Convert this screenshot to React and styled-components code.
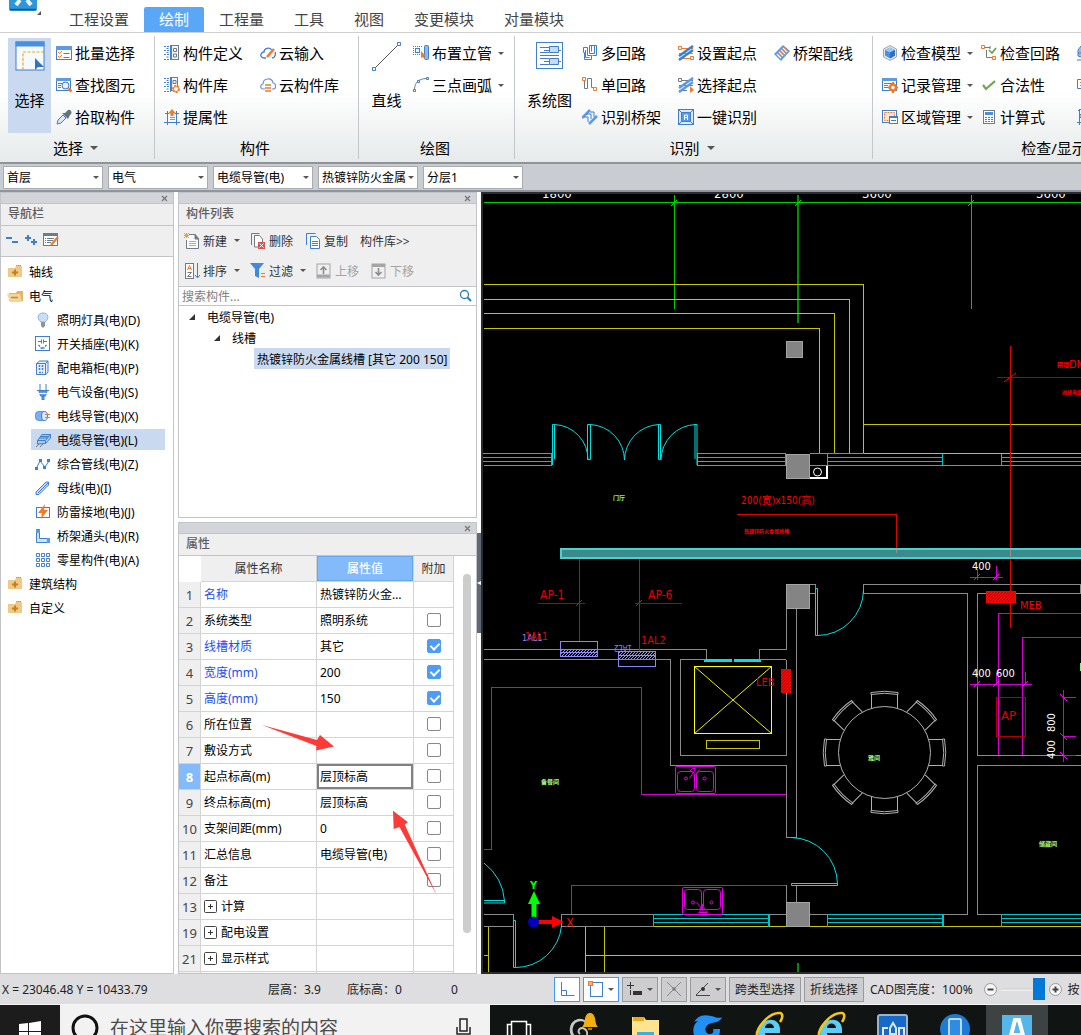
import React, { useState } from "react"
import styled, { createGlobalStyle } from "styled-components"

const GlobalStyle = createGlobalStyle`
  * {
    box-sizing: border-box;
  }
  body {
    margin: 0;
    background: #fff;
    color: #000;
    font-family: "Noto Sans", "Noto Sans CJK SC", sans-serif;
    font-size: 12px;
    overflow: hidden;
  }
  button, input, select {
    font: inherit;
    color: inherit;
  }
  button {
    padding: 0;
    border: 0;
    background: none;
    white-space: nowrap;
  }
  ul {
    list-style: none;
    margin: 0;
    padding: 0;
  }
`

const BLUE = "#3f7fcb"
const ORANGE = "#f0792a"
const GREY = "#6f7b86"

const icons = {
  batch: (
    <>
      <rect x="0.5" y="1.5" width="15" height="13" fill="#fff" stroke={BLUE} />
      <rect x="0" y="1" width="16" height="4" fill="#5a9ae6" />
      <path d="M2 7l1.5 1.5L6 6M2 11l1.5 1.5L6 10" stroke={ORANGE} />
      <path d="M7.5 8.5h6M7.5 12.5h6" stroke={GREY} />
    </>
  ),
  find: (
    <>
      <rect x="0.5" y="1.5" width="14" height="12" fill="#fff" stroke={BLUE} />
      <rect x="0" y="1" width="15" height="3" fill="#5a9ae6" />
      <path d="M2 6.5h4M2 8.5h3M2 10.5h3" stroke={GREY} />
      <circle cx="9.5" cy="8.5" r="3.5" fill="#e6effc" stroke="#3f6fb0" />
      <path d="M12.5 11.5l3 3" stroke={ORANGE} strokeWidth="3" />
    </>
  ),
  pick: (
    <>
      <path d="M1 15l1-4 5-5 3 3-5 5z" fill="#dbe8f8" stroke={BLUE} />
      <path d="M6 4l6 6 1-2 1-2c3-2 1-6-2-5l-3 3z" fill="#63727e" />
    </>
  ),
  define: (
    <>
      <path d="M0 1.5h5M0 5.5h5M0 9.5h5M0 14.5h5M2.5 3.5h3M2.5 7.5h3M2.5 12h3" stroke={BLUE} strokeDasharray="2 1" />
      <rect x="7.5" y="0.5" width="7" height="14" fill="#f4f4f4" stroke={GREY} />
      <path d="M6.5 0v15" stroke={BLUE} />
      <path d="M9.5 3.5h3v3h-3zM9.5 9h3v3h-3z" stroke={GREY} />
    </>
  ),
  library: (
    <>
      <path d="M0 1.5h5M0 5.5h5M0 9.5h5M0 14.5h5M2.5 3.5h3M2.5 7.5h3M2.5 12h3" stroke={BLUE} strokeDasharray="2 1" />
      <rect x="7.5" y="0.5" width="6" height="13" fill="#f4f4f4" stroke={GREY} />
      <path d="M6.5 0v15" stroke={BLUE} />
      <path d="M9 3.5h3v3h-3z" stroke={GREY} />
      <circle cx="12" cy="12" r="3" fill="#fff" stroke={ORANGE} strokeWidth="2" strokeDasharray="2 1" />
      <circle cx="12" cy="12" r="2.5" fill="#fff" stroke={ORANGE} />
    </>
  ),
  extract: (
    <>
      <path d="M1 4.5h4M11 4.5h4M0 13.5h16M3.5 2v14M12.5 2v14" stroke={BLUE} />
      <path d="M8 0l4 4.5h-2.5V7h-3V4.5H4z" fill={ORANGE} />
      <path d="M6 8.5h5M6 10.5h5" stroke={ORANGE} />
    </>
  ),
  cloudPen: (
    <>
      <path d="M6 13H4C1 13 0 10 1.5 8.5 2 7 3 7 4 7c0-4 6-5 7.5-2M15 7c1 2 0 6-3 6" stroke={BLUE} strokeWidth="1.3" />
      <path d="M7 12l7-8" stroke={ORANGE} strokeWidth="2.5" />
    </>
  ),
  cloudLib: (
    <>
      <path d="M5 12H3C0 12 0 7 3 7c0-6 9-7 10-1 3 0 4 6 0 6h-1" stroke="#6496d8" strokeWidth="1.2" />
      <path d="M5 8h6M5 11h6M5 14h6" stroke={ORANGE} strokeWidth="1.6" />
    </>
  ),
  riser: (
    <>
      <path d="M0 1.5h9M0 9.5h9M0.5 1v9" stroke={BLUE} strokeDasharray="1 1" />
      <rect x="2.5" y="3.5" width="4" height="4" stroke={BLUE} />
      <rect x="11.5" y="0.5" width="4" height="14" rx="1" fill="#8ab8ef" stroke={BLUE} />
      <path d="M8 6v7l2-1 1 2 1-1-1-2h2z" fill={ORANGE} />
    </>
  ),
  arc: (
    <>
      <path d="M1.5 12C2 5 6 2 13 1.5" stroke={GREY} />
      <path d="M0.5 12.5h2v2h-2zM4.5 3.5h2v2h-2zM13.5 0.5h2v2h-2z" fill="#fff" stroke={BLUE} />
    </>
  ),
  multi: (
    <path
      d="M1.5 2.5h4v8h4v4h-7v-7h-1zM3.500 5v7.500h4M7.500 0.500h7v10h-4M12.500 0.500v8h-5v-8M9.500 0.500v6"
      stroke={BLUE}
    />
  ),
  single: (
    <>
      <path d="M2.5 4v7.5h3V1.5h4v9h2" stroke={GREY} />
      <path d="M0.5 0.5h3v3h-3zM11.5 10.5h3v3h-3z" fill="#fff" stroke={ORANGE} />
    </>
  ),
  bridge: (
    <>
      <path d="M0 9l8-8M7 15l8-8" stroke="#5a9ae6" strokeWidth="2.5" />
      <path d="M2 8h4v5M5 5h4v5M8 3h4v5" stroke={BLUE} />
    </>
  ),
  setStart: (
    <>
      <path d="M1 3.5h14M1 8.5h14M1 13.5h14" stroke={ORANGE} />
      <path d="M0.5 1.5h3v3h-3zM12.5 11.5h3v3h-3z" fill="#fff" stroke={ORANGE} />
      <path d="M1 11L15 1M1 15L15 5" stroke={BLUE} strokeWidth="2.5" />
    </>
  ),
  selStart: (
    <>
      <path d="M1 3.5h14M1 8.5h14M1 13.5h8" stroke={GREY} />
      <path d="M0.5 1.5h3v3h-3z" fill="#fff" stroke={GREY} />
      <path d="M1 11L15 1M1 15L15 5" stroke="#5a9ae6" strokeWidth="2.5" />
      <path d="M12 9l4 4-4 3z" fill={ORANGE} />
    </>
  ),
  oneKey: (
    <>
      <rect x="0.5" y="0.5" width="15" height="15" fill="#dbe9fb" stroke={BLUE} />
      <path d="M0 0l4 4M16 0l-4 4M0 16l4-4M16 16l-4-4" stroke={BLUE} />
      <rect x="3.5" y="3.5" width="9" height="9" fill="#5a9ae6" stroke={BLUE} />
      <path d="M6.5 11V6h3v5M6 8.5h3" stroke="#fff" />
    </>
  ),
  wiring: (
    <>
      <path d="M0 9l9-9 7 6-9 10z" fill="#5a9ae6" />
      <path d="M5 7l4 4M7 5l4 4M9 3l4 4M3 9l4 4" stroke="#fff" strokeWidth="1.5" />
      <path d="M4 8l4 4M6 6l4 4M8 4l4 4M10 2l4 4" stroke={ORANGE} strokeWidth="1.2" />
    </>
  ),
  model: (
    <>
      <path d="M8 0.5l6.5 3.5v8L8 15.5 1.5 12V4z" fill="#e5e9ee" stroke="#9da5ac" />
      <path d="M8 2.5l5 2.5v5.5l-5 3-5-3V5z" fill="#4a90e2" />
      <path d="M8 2.5l5 2.5-5 2.5L3 5z" fill="#9cc6f7" />
      <path d="M8 7.5l5-2.5v5.5l-5 3z" fill="#2f6fc4" />
    </>
  ),
  record: (
    <>
      <rect x="0.5" y="1.5" width="14" height="12" fill="#fff" stroke={BLUE} />
      <rect x="0" y="1" width="15" height="3" fill="#5a9ae6" />
      <path d="M2 6.5h8M2 8.5h4M2 10.5h4" stroke={GREY} />
      <circle cx="11" cy="10.5" r="3" fill="#fff" stroke={ORANGE} strokeWidth="2.5" />
      <path d="M11 5v2M11 14v2M6 10.5h2M14 10.5h2" stroke={ORANGE} strokeWidth="2" />
    </>
  ),
  region: (
    <>
      <rect x="0.5" y="1.5" width="14" height="12" fill="#fff" stroke={BLUE} />
      <rect x="2.5" y="3.5" width="10" height="8" fill="#fde4cf" stroke={ORANGE} strokeDasharray="2 1" />
      <rect x="7.5" y="7.5" width="8" height="7" fill="#fff" stroke={BLUE} />
      <path d="M7 8.5h9M9 11.5h5" stroke={BLUE} />
    </>
  ),
  loop: (
    <>
      <path d="M4 2.5h5M5.5 5v7.5h6M9 1v3" stroke={GREY} />
      <path d="M0.5 0.5h3v3h-3zM11.5 11.5h3v3h-3z" fill="#fff" stroke={ORANGE} />
      <path d="M8 5l3 3 4-5" stroke="#5da34b" strokeWidth="1.6" />
    </>
  ),
  legal: <path d="M2 8l3 4 9-8" stroke="#6aa84f" strokeWidth="2.2" />,
  formula: (
    <>
      <rect x="2.5" y="1.5" width="11" height="13" fill="#fff" stroke={GREY} />
      <rect x="4" y="3" width="8" height="3" fill="#4a90e2" />
      <path d="M4 8.5h8M4 10.5h8M4 12.5h8" stroke={BLUE} strokeDasharray="2 1" />
    </>
  ),
  tower: <path d="M4 1L1 5v6l3 1 5-1V5L6 1zM5 1v14M0 15h12M1 8h8" fill="#9cbfe8" stroke={BLUE} />,
  note: (
    <>
      <path d="M0.5 2.5h15v9h-8l-3 3v-3h-4z" fill="#fff" stroke={BLUE} />
      <path d="M3 5.5h4M3 8.5h4" stroke={ORANGE} />
    </>
  ),
  axis: <path d="M2.5 0v16M0 13.5h16M1 2l2-2 2 2M3 5.5h3v3h-3z" stroke={BLUE} />,
  folder: (
    <>
      <path d="M1 4h7l1-2h6v11H1z" fill="#efc985" />
      <path d="M9 1.5h5" stroke="#d9a44a" />
      <path d="M5 8.5h6M8 5.500v6" stroke="#b98326" strokeWidth="2" />
    </>
  ),
  folderOpen: (
    <>
      <path d="M2 5h7l1-2h6v10H2z" fill="#e3b366" />
      <path d="M0 6h13l2 8H3z" fill="#f5d598" />
      <path d="M4 9.5h7" stroke="#c08c2c" strokeWidth="1.5" />
    </>
  ),
  lamp: (
    <>
      <path d="M6 10C1 6 3 1 8 1s7 5 2 9z" fill="#c8defa" stroke="#8cb4e4" />
      <path d="M6 10h4v4l-2 2-2-2z" fill="#8b949c" />
    </>
  ),
  socket: (
    <>
      <rect x="0.5" y="0.5" width="14" height="14" fill="#fff" stroke={BLUE} />
      <path d="M3 5.5h3M9 5.5h3M6.5 3.5v4M8.5 3.5v4" stroke={BLUE} />
      <path d="M3.500 9l1.500 1.500M11.500 9L10 10.500M5.500 12h4" stroke={BLUE} strokeWidth="1.3" />
    </>
  ),
  cabinet: (
    <>
      <path d="M1.5 3.5l3-2.5h8.5v11l-2 2.5h-9.5z" fill="#e7f0fb" stroke={BLUE} />
      <path d="M10.5 14V3.5h-9M10.5 3.5L13 1" stroke={BLUE} />
      <path d="M4.5 5v5M7.5 5v5M4 12.5h4" stroke={BLUE} strokeWidth="1.5" strokeDasharray="2 1" />
    </>
  ),
  plug: (
    <>
      <path d="M5 0v6M11 0v6M2 6.5h12" stroke={BLUE} />
      <path d="M4 7h8l-1.5 5h-5zM7 12h2v4H7z" fill="#6d9fdb" stroke={BLUE} />
      <path d="M4 9.5h8" stroke="#fff" />
    </>
  ),
  conduit: (
    <>
      <rect x="0.5" y="3.5" width="11" height="9" rx="3" fill="#7db0f0" stroke="#5a94dc" />
      <ellipse cx="9.5" cy="8" rx="3" ry="4.5" fill="#dceafc" stroke={BLUE} />
      <path d="M10 6.5h5M10 9.5h5" stroke={ORANGE} />
    </>
  ),
  tray: (
    <>
      <path d="M2.500 8.500h8v3l-8 .5zM2.500 8.500L7 2.500h8.500l-5 6M10.500 11.500l5-5.500V2.500M4.500 6h8.500M6 4.500h8" fill="#a9c8f0" stroke={BLUE} />
      <path d="M1 15l3-3M5 15l3-3" stroke={GREY} />
    </>
  ),
  polyline: (
    <>
      <path d="M1.5 12L5 5l5 6 4-6" stroke={BLUE} />
      <path d="M0 11h3v3H0zM4 3h3v3H4zM8 10h3v3H8zM12 3h3v3h-3z" fill={BLUE} />
    </>
  ),
  busbar: <path d="M1 12L11 2h2.5v3L4 14.5H1zM3 13l10-10" fill="#c4dbf7" stroke={BLUE} />,
  lightning: (
    <>
      <rect x="1.5" y="3.5" width="13" height="10" fill="#fff" stroke={BLUE} />
      <path d="M10 0L3 9h4l-1 6 7-9H9z" fill={ORANGE} />
    </>
  ),
  elbow: (
    <>
      <path d="M1.5 1.5h3v9h9v4h-12z" fill="#cfe1f8" stroke={BLUE} />
      <path d="M1 2h4v3H1zM12 10h3v5h-3z" fill="#5a9ae6" />
    </>
  ),
  grid: (
    <path
      d="M1.5 1.5h3v3h-3zM6.5 1.5h3v3h-3zM11.5 1.5h3v3h-3zM1.5 6.5h3v3h-3zM6.5 6.5h3v3h-3zM11.5 6.5h3v3h-3zM1.5 11.5h3v3h-3zM6.5 11.5h3v3h-3zM11.5 11.5h3v3h-3z"
      stroke={BLUE}
    />
  ),
  collapse: <path d="M1 6h6M7 10h6" stroke={BLUE} strokeWidth="2" />,
  expand: <path d="M1 6h6M4 3v6M7 10h6M10 7v6" stroke={BLUE} strokeWidth="2" />,
  edit: (
    <>
      <rect x="0.5" y="1.5" width="14" height="12" fill="#fff" stroke={GREY} />
      <rect x="0" y="1" width="15" height="3" fill={GREY} />
      <path d="M2 6.5h9M2 8.5h8M2 10.5h6" stroke={GREY} strokeDasharray="1 1 8" />
      <path d="M8 13l7-8" stroke={ORANGE} strokeWidth="2.2" />
    </>
  ),
  create: (
    <>
      <path d="M5 1.5h6l3.5 4v10h-12V7" fill="#fafafa" stroke={GREY} />
      <path d="M11 1v5h4" fill={GREY} stroke={GREY} />
      <path d="M5 8.5h7M5 10.5h7M5 12.5h7" stroke="#a9b1b8" />
      <path d="M0 0l5 5M5 0L0 5M2.5 0v5M0 2.5h5" stroke="#f0a030" />
    </>
  ),
  remove: (
    <>
      <path d="M1.5 12V0.5h8" stroke={GREY} />
      <path d="M4.5 2.5h5l3 3.5v8h-8z" fill="#fff" stroke={GREY} />
      <rect x="8" y="9" width="7" height="7" fill="#d9534f" />
      <path d="M9.5 10.5l4 4M13.5 10.5l-4 4" stroke="#fff" />
    </>
  ),
  copy: (
    <>
      <path d="M1.5 12V0.5h9" stroke={BLUE} />
      <path d="M5.5 3.5h6l3 3v9h-9z" fill="#fff" stroke={BLUE} />
      <path d="M7 8.5h6M7 10.5h6M7 12.5h6" stroke={BLUE} />
    </>
  ),
  sort: (
    <>
      <rect x="1.5" y="0.5" width="8" height="15" fill="#fff" stroke={GREY} />
      <path d="M3.5 7l2-4.5 2 4.5M4 5.5h3" stroke={ORANGE} />
      <path d="M3.5 9.5h4l-4 4h4" stroke={GREY} />
      <path d="M13.5 0v14M11 12l2.5 3 2.5-3" stroke={BLUE} />
    </>
  ),
  filter: (
    <>
      <path d="M0 0h14L9 6v9l-4-2V6z" fill="#3f8ae0" />
      <path d="M11 10.5h4M11 13.5h4" stroke={ORANGE} />
    </>
  ),
  up: (
    <>
      <rect x="1" y="1" width="13" height="14" stroke="#a5a5a5" />
      <path d="M1 13h13" stroke="#a5a5a5" strokeWidth="3" />
      <path d="M7.5 11V4M4.5 7l3-3 3 3" stroke="#8c8c8c" strokeWidth="1.6" />
    </>
  ),
  down: (
    <>
      <rect x="1" y="1" width="13" height="14" stroke="#a5a5a5" />
      <path d="M1 2.5h13" stroke="#a5a5a5" strokeWidth="3" />
      <path d="M7.5 5v7M4.5 9l3 3 3-3" stroke="#8c8c8c" strokeWidth="1.6" />
    </>
  ),
  search: (
    <>
      <circle cx="7.5" cy="6.5" r="4" stroke="#2a7fb8" strokeWidth="1.3" />
      <path d="M10.5 9.5l3.500 3.500" stroke="#2a7fb8" strokeWidth="2" />
    </>
  ),
  ortho: <path d="M2.5 1v13.5h13M2.5 9.5h5v5" stroke={BLUE} />,
  rectSnap: (
    <>
      <rect x="2.5" y="1.5" width="12" height="14" stroke={BLUE} />
      <rect x="0.500" y="0.500" width="4" height="4" fill="#f7b184" stroke={ORANGE} />
    </>
  ),
  pointAdd: (
    <>
      <path d="M0 4.5h7M3.5 1v7M3.5 9v5" stroke="#333" />
      <rect x="6" y="10" width="9" height="4" fill="#333" />
    </>
  ),
  cross: (
    <>
      <path d="M1 1l14 14M15 1L1 15" stroke="#888" />
      <path d="M6.5 6.5h3v3h-3z" fill="#777" />
    </>
  ),
  angle: (
    <>
      <path d="M1 14.5h14M1 14L13 2" stroke="#444" />
      <circle cx="8" cy="8" r="2" fill="#333" />
    </>
  ),
}

const Svg = styled.svg`
  flex: none;
  width: ${(p) => p.$size || 16}px;
  height: ${(p) => p.$size || 16}px;
  fill: none;
`

const Icon = ({ name }) => (
  <Svg viewBox="0 0 16 16" aria-hidden="true">
    {icons[name]}
  </Svg>
)

const Caret = styled.i`
  flex: none;
  border: ${(p) => (p.$big ? 4 : 3)}px solid transparent;
  border-top-color: #555;
  border-bottom: 0;
`

const Page = styled.div`
  display: flex;
  flex-direction: column;
  height: 100vh;
  overflow: hidden;
`

/* ---------- tabs ---------- */
const TabBar = styled.nav`
  display: flex;
  flex: none;
  align-items: flex-end;
  height: 33px;
  border-bottom: 1px solid #cfcfcf;
`
const Logo = styled.div`
  flex: none;
  width: 54px;
  height: 32px;
  padding-left: 9px;
`
const Tab = styled.button`
  height: 25px;
  padding: 0 15px;
  font-size: 15px;
  line-height: 25px;
  border-radius: 2px 2px 0 0;
  color: ${(p) => (p.$active ? "#fff" : "#444")};
  background: ${(p) => (p.$active ? "#5aa7f7" : "transparent")};
`

/* ---------- ribbon ---------- */
const RibbonBar = styled.div`
  display: flex;
  flex: none;
  overflow: hidden;
  border-bottom: 2px solid #8f9499;
  background: linear-gradient(#fff 45%, #e6eaea);
`
const Group = styled.section`
  display: flex;
  flex: none;
  flex-direction: column;
  width: ${(p) => p.$width}px;
  padding-top: 4px;
  position: relative;
  &:not(:last-child)::after {
    content: "";
    position: absolute;
    right: 0;
    top: 3px;
    bottom: 3px;
    width: 1px;
    background: #c5c8ca;
  }
`
const GroupBody = styled.div`
  display: flex;
  height: 96px;
  padding-left: ${(p) => p.$pad || 9}px;
  gap: ${(p) => p.$gap || 17}px;
`
const GroupLabel = styled.div`
  display: flex;
  justify-content: center;
  align-items: center;
  gap: 7px;
  height: 29px;
  padding-right: 4px;
  font-size: 15px;
  line-height: 20px;
`
const Column = styled.div`
  display: flex;
  flex-direction: column;
`
const Tool = styled.button`
  display: flex;
  align-items: center;
  gap: 3px;
  height: 32px;
  font-size: 15px;
  line-height: 20px;
  ${Caret} {
    margin-left: 3px;
  }
`
const BigTool = styled.button`
  display: flex;
  flex: none;
  flex-direction: column;
  align-items: center;
  gap: 17px;
  min-width: 43px;
  height: 95px;
  margin-top: 1px;
  padding-top: 3px;
  font-size: 15px;
  line-height: 24px;
  background: ${(p) => (p.$active ? "#c9d9f0" : "none")};
`

/* ---------- filter bar ---------- */
const FilterBar = styled.div`
  display: flex;
  flex: none;
  gap: 5px;
  padding: 2px 3px 1px;
  background: #c9ccd1;
  border-bottom: 2px solid #8f959c;
`
const SelectBox = styled.label`
  position: relative;
  width: 100px;
  select {
    display: block;
    appearance: none;
    width: 100%;
    height: 23px;
    padding: 0 11px 0 3px;
    border: 1px solid #a9abb0;
    border-radius: 0;
    background: #fff;
  }
  ${Caret} {
    position: absolute;
    right: 4px;
    top: 10px;
    pointer-events: none;
  }
`

/* ---------- panels ---------- */
const Workspace = styled.main`
  display: flex;
  flex: 1;
  min-height: 0;
`
const Middle = styled.div`
  display: flex;
  flex: none;
  flex-direction: column;
  gap: 4px;
  width: 299px;
  margin-left: 4px;
`
const Panel = styled.section`
  position: relative;
  display: flex;
  flex-direction: column;
  flex: ${(p) => p.$flex || "none"};
  width: ${(p) => p.$width || "auto"};
  min-height: 0;
  border: 1px solid #c2c4ca;
  overflow: hidden;
`
const Caption = styled.div`
  display: flex;
  flex: none;
  justify-content: flex-end;
  align-items: center;
  height: 11px;
  padding-right: 5px;
  background: #d3d4da;
  border-bottom: 1px solid #c2c4ca;
  button {
    display: flex;
  }
`
const Title = styled.h2`
  flex: none;
  height: 22px;
  margin: 0;
  padding-left: 7px;
  font-size: 12px;
  font-weight: 500;
  line-height: 20px;
  color: #5e5e5e;
  background: #efefef;
  border-bottom: 1px solid #c2c4ca;
`
const NavTools = styled.div`
  display: flex;
  flex: none;
  align-items: center;
  gap: 3px;
  height: 31px;
  padding: 0 4px 2px;
  background: #efefef;
  border-bottom: 1px solid #c2c4ca;
  button {
    display: flex;
  }
`
const NavTree = styled.ul`
  padding-top: 3px;
  li > button {
    display: flex;
    align-items: center;
    gap: 6px;
  }
`
const TreeFolder = styled.button`
  height: 24px;
  padding-left: 6px;
`
const TreeLeaf = styled.li`
  height: 24px;
  padding: 1px 0 0 30px;
`
const TreeItem = styled.button`
  width: 134px;
  height: 21px;
  padding-left: 4px;
  background: ${(p) => (p.$active ? "#c9d9f0" : "none")};
`
const ListTools = styled.div`
  display: grid;
  flex: none;
  grid-template-rows: 29px 31px;
  padding-left: 5px;
  background: #efefef;
  border-bottom: 1px solid #c2c4ca;
  > div {
    display: flex;
  }
`
const ListTool = styled.button`
  display: flex;
  align-items: center;
  gap: 3px;
  width: ${(p) => (p.$menu ? 66 : 55)}px;
  color: #333;
  &:disabled {
    color: #a3a3a3;
  }
  ${Caret} {
    margin-left: 4px;
  }
`
const SearchRow = styled.label`
  display: flex;
  flex: none;
  align-items: center;
  height: 19px;
  padding: 0 3px;
  border-bottom: 1px solid #c2c4ca;
  input {
    flex: 1;
    min-width: 0;
    height: 18px;
    padding: 0;
    border: 0;
    outline: 0;
  }
  input::placeholder {
    color: #808080;
  }
`
const Node = styled.button`
  display: flex;
  align-items: center;
  gap: 12px;
  height: 21px;
  margin-left: ${(p) => p.$indent}px;
  padding: 0 3px;
  background: ${(p) => (p.$active ? "#c9d9f0" : "none")};
`
const Twisty = styled.i`
  margin-left: 4px;
  border: solid transparent;
  border-width: 0 0 6px 6px;
  border-bottom-color: #333;
`

/* ---------- property table ---------- */
const TableArea = styled.div`
  display: flex;
  flex: 1;
  min-height: 0;
  overflow: hidden;
`
const Scrollbar = styled.div`
  width: 8px;
  margin: 18px 0 40px 9px;
  border-radius: 4px;
  background: #cdcdcd;
`
const Table = styled.table`
  flex: none;
  width: 275px;
  height: max-content;
  table-layout: fixed;
  border-spacing: 0;
  line-height: 18px;
  th, td {
    height: 26px;
    padding: 0 3px;
    border: solid #d4d4d4;
    border-width: 0 1px 1px 0;
    text-align: left;
    font-weight: 400;
    overflow: hidden;
    white-space: nowrap;
    text-overflow: ellipsis;
  }
  thead th {
    text-align: center;
    color: #333;
    background: #efefef;
  }
  thead th:first-child {
    background: #fff;
    border-color: transparent;
  }
  thead th.current {
    color: #fff;
    font-weight: 500;
    background: #82bafb;
    box-shadow: inset 0 0 0 1px #66a8f0;
  }
`
const RowHead = styled.th`
  && {
    text-align: center;
    padding: 0;
    font-size: 13px;
    font-weight: ${(p) => (p.$current ? 700 : 400)};
    color: ${(p) => (p.$current ? "#fff" : "#444")};
    background: ${(p) => (p.$current ? "#82bafb" : "#efefef")};
  }
`
const NameCell = styled.td`
  color: ${(p) => (p.$key ? "#1c50f0" : "#000")};
  button {
    display: flex;
    align-items: center;
    gap: 4px;
  }
`
const ValueCell = styled.td`
  box-shadow: ${(p) => (p.$current ? "inset 0 0 0 2px #808080" : "none")};
`
const CheckCell = styled.td`
  && {
    text-align: center;
    padding: 0;
  }
`
const Check = styled.input`
  appearance: none;
  display: block;
  width: 14px;
  height: 14px;
  margin: -1px auto 0;
  border: 1px solid #888;
  border-radius: 2px;
  background: #fff;
  &:checked {
    border-color: #4d9cf8;
    background: #4d9cf8;
  }
  &:checked::after {
    content: "";
    display: block;
    width: 4px;
    height: 7px;
    margin: 1px 0 0 4px;
    border: solid #fff;
    border-width: 0 2px 2px 0;
    transform: rotate(45deg);
  }
`
const Marks = styled.svg`
  position: absolute;
  left: -1px;
  top: -1px;
  width: 299px;
  height: 452px;
  pointer-events: none;
`
const Splitter = styled.div`
  display: flex;
  flex: none;
  flex-direction: column;
  justify-content: center;
  width: 4px;
`
const Handle = styled.button`
  display: flex;
  align-items: center;
  justify-content: center;
  height: 100px;
  background: #5f6976;
`
const Canvas = styled.div`
  flex: 1;
  min-width: 0;
  overflow: hidden;
  background: #000;
  border: solid #2a2c2f;
  border-width: 2px 0 2px 2px;
  svg {
    display: block;
  }
`

/* ---------- status bar ---------- */
const StatusBar = styled.footer`
  display: flex;
  flex: none;
  align-items: center;
  gap: 3px;
  height: 31px;
  padding-left: 2px;
  overflow: hidden;
  color: #222;
  background: #dedee0;
  border-bottom: 1px solid #f4f4f4;
  white-space: nowrap;
`
const Readout = styled.span`
  flex: none;
  width: ${(p) => p.$width}px;
`
const StatusButton = styled.button`
  display: flex;
  flex: none;
  align-items: center;
  justify-content: center;
  gap: 4px;
  height: 25px;
  padding: 0 ${(p) => (p.$text ? 5 : 4)}px;
  border: 1px solid ${(p) => (p.$on ? "#3d9bf5" : "#9a9a9c")};
  background: ${(p) => (p.$on ? "#fff" : "#cdcdcf")};
`
const Brightness = styled.label`
  flex: none;
  margin: 0 8px 0 3px;
`
const RoundButton = styled.button`
  display: flex;
  flex: none;
  border-radius: 50%;
`
const Range = styled.input`
  appearance: none;
  flex: none;
  width: 44px;
  height: 22px;
  margin: 0 1px;
  background: linear-gradient(#d0d0d2, #f2f2f2) center / 100% 3px no-repeat;
  &::-webkit-slider-thumb {
    appearance: none;
    width: 12px;
    height: 22px;
    background: #0078d7;
  }
`
const Hint = styled.span`
  margin-left: 3px;
`

/* ---------- taskbar ---------- */
const Taskbar = styled.div`
  display: flex;
  flex: none;
  height: 30px;
  overflow: hidden;
  background: #101413;
`
const Start = styled.button`
  display: flex;
  flex: none;
  justify-content: center;
  width: 60px;
  padding-top: 16px;
  background: #1c1c1c;
`
const SearchBox = styled.label`
  display: flex;
  flex: none;
  align-items: center;
  width: 430px;
  height: 46px;
  padding: 0 16px 0 10px;
  gap: 10px;
  background: #f2f2f2;
  input {
    flex: 1;
    min-width: 0;
    padding: 0;
    border: 0;
    outline: 0;
    background: none;
    font-size: 19px;
  }
  input::placeholder {
    color: #4c4c4c;
  }
`
const TaskItem = styled.button`
  display: flex;
  flex: none;
  justify-content: center;
  width: 62px;
  height: 48px;
  padding-top: 6px;
  background: ${(p) => (p.$active ? "#3d4242" : "none")};
`

const tabs = ["工程设置", "绘制", "工程量", "工具", "视图", "变更模块", "对量模块"]

const filters = ["首层", "电气", "电缆导管(电)", "热镀锌防火金属线槽", "分层1"]

const navItems = [
  ["lamp", "照明灯具(电)(D)"],
  ["socket", "开关插座(电)(K)"],
  ["cabinet", "配电箱柜(电)(P)"],
  ["plug", "电气设备(电)(S)"],
  ["conduit", "电线导管(电)(X)"],
  ["tray", "电缆导管(电)(L)"],
  ["polyline", "综合管线(电)(Z)"],
  ["busbar", "母线(电)(I)"],
  ["lightning", "防雷接地(电)(J)"],
  ["elbow", "桥架通头(电)(R)"],
  ["grid", "零星构件(电)(A)"],
]

const properties = [
  { no: 1, name: "名称", value: "热镀锌防火金属线槽", key: true },
  { no: 2, name: "系统类型", value: "照明系统", check: false },
  { no: 3, name: "线槽材质", value: "其它", key: true, check: true },
  { no: 4, name: "宽度(mm)", value: "200", key: true, check: true },
  { no: 5, name: "高度(mm)", value: "150", key: true, check: true },
  { no: 6, name: "所在位置", value: "", check: false },
  { no: 7, name: "敷设方式", value: "", check: false },
  { no: 8, name: "起点标高(m)", value: "层顶标高", check: false, current: true },
  { no: 9, name: "终点标高(m)", value: "层顶标高", check: false },
  { no: 10, name: "支架间距(mm)", value: "0", check: false },
  { no: 11, name: "汇总信息", value: "电缆导管(电)", check: false },
  { no: 12, name: "备注", value: "", check: false },
  { no: 13, name: "计算", group: true },
  { no: 19, name: "配电设置", group: true },
  { no: 21, name: "显示样式", group: true },
]

const ToolColumn = ({ items }) => (
  <Column>
    {items.map(([icon, label, menu]) => (
      <Tool key={icon} aria-label={label || icon}>
        <Icon name={icon} />
        {label}
        {menu && <Caret />}
      </Tool>
    ))}
  </Column>
)

const Ribbon = () => (
  <RibbonBar>
    <Group $width={155}>
      <GroupBody $pad={8} $gap={5}>
        <BigTool $active>
          <Svg $size={30} viewBox="0 0 30 30">
            <rect x="1" y="1" width="28" height="28" fill="#f6faff" stroke={BLUE} />
            <rect x="0.5" y="0.5" width="29" height="5" fill="#4a90e2" />
            <path d="M8 29V11h21" stroke="#f0a818" strokeWidth="1.2" strokeDasharray="3 1.5" />
            <path d="M20 17v12l3-3h6z" fill="#2f74c4" />
          </Svg>
          选择
        </BigTool>
        <ToolColumn items={[["batch", "批量选择"], ["find", "查找图元"], ["pick", "拾取构件"]]} />
      </GroupBody>
      <GroupLabel>
        选择 <Caret $big />
      </GroupLabel>
    </Group>
    <Group $width={204}>
      <GroupBody>
        <ToolColumn items={[["define", "构件定义"], ["library", "构件库"], ["extract", "提属性"]]} />
        <ToolColumn items={[["cloudPen", "云输入"], ["cloudLib", "云构件库"]]} />
      </GroupBody>
      <GroupLabel>构件</GroupLabel>
    </Group>
    <Group $width={156}>
      <GroupBody $pad={6} $gap={5}>
        <BigTool>
          <Svg $size={30} viewBox="0 0 30 30">
            <path d="M2 28L27 3" stroke="#555" />
            <path d="M0.5 26.5h3v3h-3zM25.5 1.5h3v3h-3z" fill="#fff" stroke={BLUE} />
          </Svg>
          直线
        </BigTool>
        <ToolColumn items={[["riser", "布置立管", true], ["arc", "三点画弧", true]]} />
      </GroupBody>
      <GroupLabel>绘图</GroupLabel>
    </Group>
    <Group $width={358}>
      <GroupBody $pad={12} $gap={10}>
        <BigTool>
          <Svg $size={30} viewBox="0 0 30 30">
            <rect x="1.5" y="1.5" width="26" height="26" fill="#fff" stroke={BLUE} />
            <path d="M5 6.5h9M5 11.5h9M5 14.5h19M5 17.5h9M5 23.5h9M14 9.5H9M14 20.5H9M24 9.5h2M24 20.5h2" stroke={BLUE} />
            <path d="M14.5 5.5h9v6h-9zM14.5 17.5h9v6h-9z" fill="#c5dcf8" stroke={BLUE} />
          </Svg>
          系统图
        </BigTool>
        <Columns>
          <ToolColumn items={[["multi", "多回路"], ["single", "单回路"], ["bridge", "识别桥架"]]} />
          <ToolColumn items={[["setStart", "设置起点"], ["selStart", "选择起点"], ["oneKey", "一键识别"]]} />
          <ToolColumn items={[["wiring", "桥架配线"]]} />
        </Columns>
      </GroupBody>
      <GroupLabel>
        识别 <Caret $big />
      </GroupLabel>
    </Group>
    <Group $width={366}>
      <GroupBody $gap={8}>
        <ToolColumn
          items={[["model", "检查模型", true], ["record", "记录管理", true], ["region", "区域管理", true]]}
        />
        <Columns>
          <ToolColumn items={[["loop", "检查回路"], ["legal", "合法性"], ["formula", "计算式"]]} />
          <ToolColumn items={[["tower"], ["note"], ["axis"]]} />
        </Columns>
      </GroupBody>
      <GroupLabel>检查/显示</GroupLabel>
    </Group>
  </RibbonBar>
)

const Columns = styled.div`
  display: flex;
  gap: 17px;
`

const PanelHead = ({ title }) => (
  <>
    <Caption>
      <button aria-label="关闭">
        <Svg $size={7} viewBox="0 0 7 7">
          <path d="M1 1l5 5M6 1L1 6" stroke="#777" strokeWidth="1.3" />
        </Svg>
      </button>
    </Caption>
    <Title>{title}</Title>
  </>
)

const NavPanel = () => {
  const [active, setActive] = useState("tray")
  return (
    <Panel $width="174px">
      <PanelHead title="导航栏" />
      <NavTools>
        <button aria-label="折叠"><Icon name="collapse" /></button>
        <button aria-label="展开"><Icon name="expand" /></button>
        <button aria-label="编辑"><Icon name="edit" /></button>
      </NavTools>
      <NavTree>
        <li><TreeFolder><Icon name="folder" />轴线</TreeFolder></li>
        <li>
          <TreeFolder><Icon name="folderOpen" />电气</TreeFolder>
          <ul>
            {navItems.map(([icon, label]) => (
              <TreeLeaf key={icon}>
                <TreeItem $active={active === icon} onClick={() => setActive(icon)}>
                  <Icon name={icon} />
                  {label}
                </TreeItem>
              </TreeLeaf>
            ))}
          </ul>
        </li>
        <li><TreeFolder><Icon name="folder" />建筑结构</TreeFolder></li>
        <li><TreeFolder><Icon name="folder" />自定义</TreeFolder></li>
      </NavTree>
    </Panel>
  )
}

const ComponentList = () => (
  <Panel $flex="0 0 326px">
    <PanelHead title="构件列表" />
    <ListTools>
      <div>
        <ListTool $menu><Icon name="create" />新建 <Caret /></ListTool>
        <ListTool><Icon name="remove" />删除</ListTool>
        <ListTool><Icon name="copy" />复制</ListTool>
        <ListTool>构件库&gt;&gt;</ListTool>
      </div>
      <div>
        <ListTool $menu><Icon name="sort" />排序 <Caret /></ListTool>
        <ListTool $menu><Icon name="filter" />过滤 <Caret /></ListTool>
        <ListTool disabled><Icon name="up" />上移</ListTool>
        <ListTool disabled><Icon name="down" />下移</ListTool>
      </div>
    </ListTools>
    <SearchRow>
      <input type="text" placeholder="搜索构件..." aria-label="搜索构件" />
      <Icon name="search" />
    </SearchRow>
    <ul>
      <li>
        <Node $indent={3}><Twisty />电缆导管(电)</Node>
        <ul>
          <li>
            <Node $indent={28}><Twisty />线槽</Node>
            <Node $indent={75} $active>热镀锌防火金属线槽 [其它 200 150]</Node>
          </li>
        </ul>
      </li>
    </ul>
  </Panel>
)

const PropertyPanel = () => (
  <Panel $flex="1">
    <PanelHead title="属性" />
    <TableArea>
      <Table>
        <colgroup>
          <col width="22" />
          <col width="116" />
          <col width="97" />
          <col width="40" />
        </colgroup>
        <thead>
          <tr>
            <th />
            <th>属性名称</th>
            <th className="current">属性值</th>
            <th>附加</th>
          </tr>
        </thead>
        <tbody>
          {properties.map((p) => (
            <tr key={p.no}>
              <RowHead $current={p.current}>{p.no}</RowHead>
              <NameCell $key={p.key}>
                {p.group ? (
                  <button>
                    <Svg $size={13} viewBox="0 0 13 13">
                      <rect x="0.5" y="0.5" width="12" height="12" rx="1" stroke="#444" />
                      <path d="M4 6.5h5M6.5 4v5" stroke="#333" />
                    </Svg>
                    {p.name}
                  </button>
                ) : (
                  p.name
                )}
              </NameCell>
              <ValueCell $current={p.current}>{p.value}</ValueCell>
              <CheckCell>
                {p.check !== undefined && (
                  <Check type="checkbox" defaultChecked={p.check} aria-label={p.name} />
                )}
              </CheckCell>
            </tr>
          ))}
          <tr>
            <RowHead />
            <td />
            <td />
            <td />
          </tr>
        </tbody>
      </Table>
      <Scrollbar />
    </TableArea>
    <Marks viewBox="178 522 299 452" fill="#fb3b38">
      <path d="M262 725L317 740L320 735L334 746.5L316 750.5L316.5 746Z" />
      <path d="M436.7 895L404.7 824.5L408 822.3L393 810.7L393.7 829L399.5 827Z" />
    </Marks>
  </Panel>
)

/* ---------- floor plan ---------- */
const CadText = styled.text`
  font-family: "Liberation Sans Narrow", "DejaVu Sans Condensed", "Noto Sans CJK SC", sans-serif;
  font-size: ${(p) => p.$size || 11}px;
  font-weight: ${(p) => (p.$bold ? 700 : 400)};
  fill: ${(p) => p.$color || "#fff"};
  stroke: none;
`

const Windows = ({ y, spans }) =>
  spans.map(([a, b]) => (
    <path
      key={a}
      d={`M${a} ${y}H${b}M${a} ${y + 4}H${b}M${a} ${y + 8}H${b}M${a + 0.5} ${y}v12M${b - 0.5} ${y}v12`}
    />
  ))

const Sink = ({ x, y, flip }) => (
  <g transform={`translate(${x} ${y})`} stroke="#e000e0">
    <rect width="40" height="27" rx="1" />
    <rect x="2" y={flip ? 2 : 5} width="17" height="20" rx="3" />
    <rect x="21" y={flip ? 2 : 5} width="17" height="20" rx="3" />
    <circle cx="10.5" cy={flip ? 15 : 12} r="1.5" />
    <circle cx="29" cy={flip ? 15 : 12} r="1.5" />
    <path d={flip ? "M14 15l6 7M17 25l3-8M16 22h7l2 3h-9M20 17v6" : "M14 12l6-9M18 11l6-8M14 5l3-3h3M14 3l3 3"} />
  </g>
)

const Ticks = ({ points }) => <path d={points.map(([x, y]) => `M${x - 3} ${y + 3}l6-6`).join("")} />

const FloorPlan = () => (
  <svg width="100%" height="100%" viewBox="483 194 598 778" preserveAspectRatio="xMinYMin slice" fill="none">
    <defs>
      <pattern id="hatchBlue" width="3" height="3" patternUnits="userSpaceOnUse">
        <path d="M0 3L3 0" stroke="#9a96ff" />
      </pattern>
      <pattern id="hatchRed" width="3" height="3" patternUnits="userSpaceOnUse">
        <rect width="3" height="3" fill="#d00000" />
        <path d="M0 3L3 0" stroke="#ff1010" />
      </pattern>
    </defs>

    <g shapeRendering="crispEdges">
      <path d="M798 195V323M798 963V972" stroke="#008f00" strokeWidth="2" />
      <path d="M484 202.5H1081M674.5 195V309M971.5 195V309" stroke="#00cc00" />
      <g stroke="#c9c400">
        <path d="M484 284.5H863.5V454M484 299.5H849.5V454M484 313.5H834.5V454M484 328.5H819.5V454" />
        <path d="M864 424.5H1081M864 453.5H1081" />
        <path d="M484 926.5H513M585 926.5H1081M585 955.5H1081M484 955.5H489M488.5 926V972M585.5 926V972M604.5 926V972" />
        <rect x="694.5" y="666.5" width="77" height="67" stroke="#ffff00" />
        <rect x="706.5" y="740.5" width="53" height="8" />
      </g>
      <g stroke="#00c4c4">
        <Windows y={453.5} spans={[[480, 552], [697, 786], [827, 943], [1001, 1090]]} />
        <path d="M484 465.5H552M697 465.5H786M827 465.5H943M1001 465.5H1081M827 453.5H863" />
        <Windows y={914.5} spans={[[653, 769], [827, 943], [1001, 1090]]} />
        <path d="M704 660.5H732M734 660.5H761" stroke="#00e0e0" strokeWidth="3" />
      </g>
      <path d="M864 453.5H1081" stroke="#c9c400" />
      <g stroke="#8a8a8a">
        <path d="M943 465.5H1001M484 649.5H706.5V659M484 659.5H670.5V765.5H786M680.5 755.5V659.5H706M680 755.5H786M786 649.5H759.5V659.5H786" />
        <path d="M786.5 608V649.5M786.5 659.5V755.5M786.5 765V837.5H796.5V608M786.5 885V902M796.5 886V902" />
        <path d="M810 584.5H815.5V593.5H810M1081 584.5H863.5V593.5H967.5V914.5M1080.5 584V593.5H977.5V755.5H1081M1081 765.5H977.5V914.5" />
        <path d="M484 914.5H513.5V926.5H484M653 914.5H561.5V926.5H653M769 914.5H786M769.5 914V926M810 914.5H827M943 914.5H967M943.5 914V926M977 914.5H1001M653.5 914V926" />
      </g>
      <g fill="#848484" stroke="#a4a4a4">
        <rect x="786.5" y="341.5" width="16" height="16" />
        <rect x="786.5" y="454.5" width="23" height="24" />
        <rect x="786.5" y="584.5" width="23" height="24" />
        <rect x="786.5" y="902.5" width="23" height="24" />
      </g>
      <path d="M810 465.5H827M810 453.5H827" stroke="#8a8a8a" />
      <path d="M827 466V477.5H810" stroke="#fff" strokeWidth="2" />
      <g stroke="#d000d0">
        <path d="M484 849.5H491.5V687.5H641.5V794.5H786M571.5 914V885.5H786" />
        <path d="M998.5 755V613.5H1081M1022.5 755V637.5H1081" />
        <path d="M970 577.5H1003M977.5 569V580M996.5 566V580" />
        <path d="M970 684.5H1032M977.5 678V687M996.5 673V684M1025.5 672V684" />
        <path d="M1063.5 690V762M1063 697.5H1076M1063 736.5H1076M1063 755.5H1076" />
      </g>
      <g stroke="#e00000">
        <path d="M737 514.5H896.5V553M579.5 558V641M639.5 558V651M1010.5 346V628" />
        <path d="M538 603.5H585M635 603.5H682M997 377.5H1081" stroke="#b00000" />
        <rect x="996.5" y="697.5" width="29" height="39" stroke="#b00000" />
      </g>
      <rect x="561" y="549" width="540" height="9" fill="#388c8b" stroke="#4fd0ce" strokeWidth="2" />
      <path d="M896.5 550V553M1010.5 550V558" stroke="#a08c88" />
      <g stroke="#8a86f5">
        <rect x="560.5" y="641.5" width="37" height="15" />
        <rect x="618.5" y="651.5" width="37" height="15" />
        <path d="M560 652.5H597M618 655.5H655" />
      </g>
      <path d="M1080.5 663V671" stroke="#8ff07a" />
    </g>

    <rect x="561" y="649" width="36" height="8" fill="url(#hatchBlue)" />
    <rect x="619" y="652" width="36" height="7" fill="url(#hatchBlue)" />
    <rect x="986.5" y="591.5" width="29" height="11" fill="url(#hatchRed)" stroke="#f00" />
    <rect x="781" y="669" width="10" height="24" fill="url(#hatchRed)" />
    <path d="M694.5 666.5L771.5 733.5M771.5 666.5L694.5 733.5" stroke="#f0f000" />
    <g stroke="#00dd00"><Ticks points={[[674, 203], [798, 203], [971, 203]]} /></g>
    <g stroke="#ff00ff">
      <Ticks points={[[977, 577], [996, 577], [977, 684], [996, 684], [1025, 684]]} />
      <path d="M1060 694l7 7M1060 733l7 7M1060 752l7 7" />
    </g>
    <g stroke="#ff0000">
      <Ticks points={[[579, 603], [639, 603]]} />
      <path d="M1004 382l12-9" />
    </g>

    {/* doors */}
    <g stroke="#00e0e0">
      <path d="M552.5 465V424.5H554.5V459M554.5 424.5A35 35 0 0 1 588 460" />
      <path d="M587.5 424.5h3v35h-3zM590.5 424.5A36 36 0 0 1 624.5 460A36 36 0 0 1 658.5 424.5" />
      <path d="M658.5 424.5h2v35h-2zM695.5 424.5A36 36 0 0 0 661 460M697 465V424.5H695V459" />
      <path d="M484 863Q503 878 504.5 901M484 900.5H504.5V903H484" />
      <path d="M513.5 920.5h2v47h-2zM515.5 967.5A46 46 0 0 0 561.5 926" />
      <path d="M815.5 588.5h2v47h-2zM817.5 635.5A46 46 0 0 0 863.5 590" />
      <path d="M791.5 883.5h46v2h-46zM791 837.5A47 47 0 0 1 837.5 884" />
    </g>
    <circle cx="817.5" cy="472" r="4" stroke="#fff" />

    {/* round table */}
    <g stroke="#b0b0b0">
      <circle cx="884.5" cy="752.5" r="46" />
      {[0, 45, 90, 135, 180, 225, 270, 315].map((a) => (
        <path
          key={a}
          transform={`rotate(${a} 884.5 752.5)`}
          d="M871.5 708V694M897.5 708V694M871 694.5Q884.5 692 898 694.5V692.5Q884.5 690 871 692.5Z"
        />
      ))}
    </g>
    <Sink x={675.5} y={766.5} />
    <Sink x={682.5} y={887.5} flip />

    <CadText x="542" y="198" $size={13}>1800</CadText>
    <CadText x="714" y="198" $size={13}>2800</CadText>
    <CadText x="862" y="198" $size={13}>3600</CadText>
    <CadText x="1036" y="198" $size={13}>3600</CadText>
    <CadText x="972" y="570">400</CadText>
    <CadText x="972" y="677">400</CadText>
    <CadText x="996" y="677">600</CadText>
    <CadText transform="translate(1055 732) rotate(-90)">800</CadText>
    <CadText transform="translate(1055 759) rotate(-90)">400</CadText>

    <CadText $color="#f00" x="741" y="504" $size={10}>200(宽)x150(高)</CadText>
    <CadText $color="#f00" x="744" y="533" $size={5} $bold>热镀锌防火金属线槽</CadText>
    <CadText $color="#f00" x="1057" y="367" $size={6} $bold>预埋</CadText>
    <CadText $color="#f00" x="1069" y="368">DN1</CadText>
    <CadText $color="#f00" x="1062" y="394" $size={5} $bold>进线电缆</CadText>
    <CadText $color="#e00000" x="540" y="599" $size={12}>AP-1</CadText>
    <CadText $color="#e00000" x="648" y="599" $size={12}>AP-6</CadText>
    <CadText $color="#8a86f5" x="522" y="641" $size={9}>1AL1</CadText>
    <CadText $color="#e00000" x="525" y="640" $size={10}>1AL1</CadText>
    <CadText $color="#e00000" x="641" y="644">1AL2</CadText>
    <CadText $color="#8a86f5" transform="translate(632 645) rotate(180)" $size={8}>1AL2</CadText>
    <CadText $color="#e00000" x="756" y="686">LEB</CadText>
    <CadText $color="#f00" x="1020" y="609">MEB</CadText>
    <CadText $color="#e00000" x="1001" y="720" $size={13}>AP</CadText>

    <CadText $color="#8ff07a" x="613" y="500" $size={6} $bold>门厅</CadText>
    <CadText $color="#a5ff80" x="541" y="784" $size={6} $bold>备餐间</CadText>
    <CadText $color="#a5ff80" x="868" y="760" $size={6} $bold>雅间</CadText>
    <CadText $color="#a5ff80" x="1039" y="846" $size={6} $bold>储藏间</CadText>

    {/* origin marker */}
    <path d="M534 920V903" stroke="#00ff00" strokeWidth="5" />
    <path d="M528 904L534 891L540 904Z" fill="#00ff00" />
    <path d="M536 922H553" stroke="#f00" strokeWidth="4" />
    <path d="M552 916L564 922L552 928Z" fill="#f00" />
    <circle cx="533.5" cy="922" r="5.5" fill="#0000c0" />
    <CadText $color="#00ff00" x="530" y="889" $bold>Y</CadText>
    <CadText $color="#f00" x="566" y="927" $size={13}>X</CadText>
  </svg>
)

const Zoomer = ({ plus }) => (
  <RoundButton aria-label={plus ? "增大" : "减小"}>
    <Svg $size={13} viewBox="0 0 13 13">
      <circle cx="6.5" cy="6.5" r="6" fill="#f6f6f6" stroke="#999" />
      <path d={plus ? "M3.5 6.5h6M6.5 3.5v6" : "M3.5 6.5h6"} stroke="#444" strokeWidth="2" />
    </Svg>
  </RoundButton>
)

const Status = () => (
  <StatusBar>
    <Readout $width={263}>X = 23046.48 Y = 10433.79</Readout>
    <Readout $width={76}>层高：3.9</Readout>
    <Readout $width={101}>底标高：0</Readout>
    <Readout $width={100}>0</Readout>
    <StatusButton $on aria-label="正交"><Icon name="ortho" /></StatusButton>
    <StatusButton $on aria-label="捕捉"><Icon name="rectSnap" /><Caret /></StatusButton>
    <StatusButton aria-label="点加长度"><Icon name="pointAdd" /><Caret /></StatusButton>
    <StatusButton aria-label="交点"><Icon name="cross" /></StatusButton>
    <StatusButton aria-label="角度"><Icon name="angle" /><Caret /></StatusButton>
    <StatusButton $text>跨类型选择</StatusButton>
    <StatusButton $text>折线选择</StatusButton>
    <Brightness htmlFor="brightness">CAD图亮度：100%</Brightness>
    <Zoomer />
    <Range id="brightness" type="range" min="0" max="100" defaultValue="100" />
    <Zoomer plus />
    <Hint>按</Hint>
  </StatusBar>
)

const Edge = () => (
  <Svg $size={32} viewBox="0 0 32 32">
    <path d="M26 22H12c1 6 9 7 13 3v5c-8 5-20 2-20-9C5 8 26 3 27 18v4M12 17h9c0-6-9-6-9 0" fill="#5ccdf4" />
    <path d="M4 26C2 18 16 1 27 2c4 1 2 6 0 9" stroke="#f5c518" strokeWidth="2.5" />
  </Svg>
)

const DesktopBar = () => (
  <Taskbar>
    <Start aria-label="开始">
      <Svg $size={22} viewBox="0 0 22 22">
        <path d="M0 3l9-1v8H0zM10 2l12-2v10H10zM0 11h9v9l-9-1zM10 11h12v11l-12-2z" fill="#fff" />
      </Svg>
    </Start>
    <SearchBox>
      <Svg $size={30} viewBox="0 0 30 30">
        <circle cx="15" cy="15" r="12" stroke="#111" strokeWidth="3" />
      </Svg>
      <input type="text" placeholder="在这里输入你要搜索的内容" aria-label="搜索" />
      <Svg $size={20} viewBox="0 0 20 20">
        <rect x="6" y="1" width="7" height="12" stroke="#222" strokeWidth="1.5" />
        <path d="M3 9v7h13V9" stroke="#222" strokeWidth="1.5" />
      </Svg>
    </SearchBox>
    <TaskItem aria-label="任务视图">
      <Svg $size={32} viewBox="0 0 32 32">
        <path d="M6.5 32V10.5h15V32M6 13.5H2.5V32M22 13.5h3.5V32" stroke="#fff" strokeWidth="1.5" />
      </Svg>
    </TaskItem>
    <TaskItem aria-label="提醒">
      <Svg $size={34} viewBox="0 0 34 34">
        <path d="M20 11C8 3 0 18 8 27c8 6 16-2 12-8-5-5-10 1-6 4M16 9C4 9 2 24 12 28" stroke="#c6c9cc" strokeWidth="2" />
        <path d="M16 16c4-3 1-12 7-14h2c6 2 3 11 7 14z" fill="#f0b010" />
        <path d="M22 17h4v2h-4z" fill="#b57c00" />
      </Svg>
    </TaskItem>
    <TaskItem aria-label="文件夹">
      <Svg $size={32} viewBox="0 0 32 32">
        <path d="M3 6h12l2 3h13v23H3z" fill="#ffe48f" />
        <path d="M4 6h11v4H4z" fill="#e9a820" />
        <path d="M8 21h17v11H8z" fill="#36b1e8" />
      </Svg>
    </TaskItem>
    <TaskItem aria-label="浏览器">
      <Svg $size={32} viewBox="0 0 32 32">
        <path
          d="M31 6c-2 5-6 5-10 6-9 2-8 11-2 11 3 0 4-2 3-5h7c1 17-22 20-26 6-2-7 1-12 4-14-2 0-3 0-4 1C8 3 15 4 20 5s8 3 11 1z"
          fill="#2190f5"
        />
      </Svg>
    </TaskItem>
    <TaskItem aria-label="网页"><Edge /></TaskItem>
    <TaskItem aria-label="网页"><Edge /></TaskItem>
    <TaskItem aria-label="绘图">
      <Svg $size={32} viewBox="0 0 32 32">
        <rect x="1" y="4" width="29" height="30" rx="2" fill="#1669c6" stroke="#9db4c8" strokeWidth="2" />
        <path d="M11 17H6v13h5M13 31V17l3-5 3 5v14M13 23h6M22 31V17h5v13" stroke="#dbe8f4" strokeWidth="2" />
      </Svg>
    </TaskItem>
    <TaskItem aria-label="手机">
      <Svg $size={32} viewBox="0 0 32 32">
        <circle cx="16" cy="18" r="15" fill="#1c7bd4" />
        <rect x="10" y="8" width="12" height="22" rx="1" fill="#2e8ce2" stroke="#e8f3ff" strokeWidth="1.5" />
      </Svg>
    </TaskItem>
    <TaskItem $active aria-label="算量">
      <Svg $size={32} viewBox="0 0 32 32">
        <rect x="1" y="4" width="30" height="30" fill="#55b6ea" />
        <path d="M8 32L14 9h4l6 23M11 24h10" stroke="#fff" strokeWidth="4" />
      </Svg>
    </TaskItem>
  </Taskbar>
)

function App() {
  const [tab, setTab] = useState("绘制")
  return (
    <Page>
      <GlobalStyle />
      <TabBar>
        <Logo>
          <Svg $size={32} viewBox="0 0 32 32">
            <path d="M0 0h28v9q0 2-2 2H2q-2 0-2-2z" fill="#2f96da" />
            <path d="M1 9.5h26" stroke="#0c5c9c" strokeWidth="1.5" />
            <path d="M7 5L11 0M22 5L18 0" stroke="#e8f4fc" strokeWidth="4" />
            <path d="M32 11v4h-4z" fill="#555" />
          </Svg>
        </Logo>
        {tabs.map((t) => (
          <Tab key={t} $active={t === tab} onClick={() => setTab(t)}>
            {t}
          </Tab>
        ))}
      </TabBar>
      <Ribbon />
      <FilterBar>
        {filters.map((f) => (
          <SelectBox key={f}>
            <select aria-label={f}>
              <option>{f}</option>
            </select>
            <Caret />
          </SelectBox>
        ))}
      </FilterBar>
      <Workspace>
        <NavPanel />
        <Middle>
          <ComponentList />
          <PropertyPanel />
        </Middle>
        <Splitter>
          <Handle aria-label="收起面板">
            <Svg $size={4} viewBox="0 0 4 4">
              <path d="M4 0v4L0 2z" fill="#fff" />
            </Svg>
          </Handle>
        </Splitter>
        <Canvas>
          <FloorPlan />
        </Canvas>
      </Workspace>
      <Status />
      <DesktopBar />
    </Page>
  )
}

export default App
